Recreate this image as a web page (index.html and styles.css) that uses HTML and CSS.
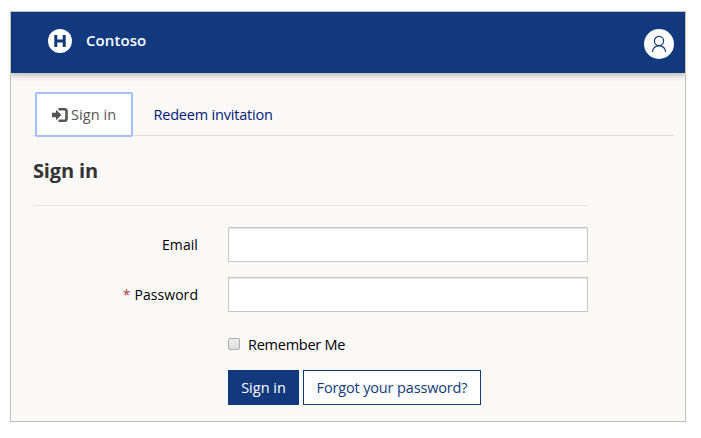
FILE: index.html
```html
<!DOCTYPE html>
<html lang="en">
<head>
<meta charset="utf-8">
<title>Contoso</title>
<link rel="stylesheet" href="styles.css">
</head>
<body>
<div class="window">
  <header class="header">
    <svg class="logo" viewBox="0 0 24 24"><circle cx="12" cy="12" r="12"/><path d="M7.8 6v12M16.2 6v12M7.8 12h8.4"/></svg>
    <span class="brand">Contoso</span>
    <svg class="avatar" viewBox="0 0 30 30"><circle class="disc" cx="15" cy="15" r="15"/><circle cx="15" cy="12" r="4.6"/><path d="M8.4 23a6.6 6.4 0 0 1 13.2 0"/></svg>
  </header>
  <main class="content">
    <nav class="tabs">
      <a class="tab active"><svg class="enter" viewBox="0 0 16 14"><path d="M0 4.8h4V1.8L9.5 7 4 12.2V9.2H0z"/><path class="door" d="M6.5 1.3h6a2 2 0 0 1 2 2v7.4a2 2 0 0 1-2 2h-6"/></svg><span>Sign in</span></a>
      <a class="tab redeem"><span>Redeem invitation</span></a>
    </nav>
    <form class="form">
      <h1 class="title">Sign in</h1>
      <div class="row"><label class="label">Email</label><input class="field" type="text"></div>
      <div class="row"><label class="label"><span class="star">*</span><span class="password">Password</span></label><input class="field" type="password"></div>
      <label class="remember"><span class="box"></span><span class="caption">Remember Me</span></label>
      <div class="actions"><button class="btn primary" type="button">Sign in</button><button class="btn forgot" type="button">Forgot your password?</button></div>
    </form>
  </main>
</div>
</body>
</html>
```
FILE: styles.css
```css
* { box-sizing: border-box; }
body { margin: 0; background: #fff; font: 400 14.5px/20px "Open Sans", "Noto Sans", sans-serif; color: #000; }
.window { width: 676px; height: 411px; margin: 11px 0 0 10px; border: 1px solid #bfbfbf; background: #faf9f8; }
.header { height: 61px; background: #12397d; display: flex; align-items: center; padding: 0 11px 0 37px; box-shadow: 0 2px 6px rgba(0,0,0,.3); clip-path: inset(0 0 -10px 0); }
.logo { width: 24px; height: 24px; fill: #fff; margin-top: -3px; }
.logo path { stroke: #12397d; stroke-width: 3; fill: none; }
.brand { color: #fff; font-size: 15px; font-weight: 600; letter-spacing: .08px; margin: -5px auto 0 14px; }
.avatar { width: 30px; height: 30px; margin-top: 3px; fill: none; stroke: #12397d; stroke-width: 1.2; }
.avatar .disc { fill: #fff; stroke: none; }
.content { padding: 19px 11px 0 22px; }
.tabs { display: flex; height: 44px; border-bottom: 1px solid #ddd; }
.tab { display: flex; align-items: center; height: 45px; margin-left: 2px; color: #00187a; white-space: nowrap; }
.redeem { margin-left: 20.5px; letter-spacing: -.2px; }
.active { width: 98px; border: 2px solid #a1c1f8; border-radius: 2px; background: #fff; color: #555; padding-left: 15px; letter-spacing: .08px; }
.enter { width: 16px; height: 14px; margin-right: 3px; fill: #555; flex: none; }
.enter .door { fill: none; stroke: #555; stroke-width: 2.6; }
.form { width: 555px; }
.title { height: 70px; margin: 0 0 21px; padding-top: 21px; border-bottom: 1px solid #e5e5e5; font-size: 20px; line-height: 28px; font-weight: 700; letter-spacing: -.15px; color: #333; }
.row { display: flex; height: 35px; margin-bottom: 15px; }
.label { width: 165px; margin-right: 30px; display: flex; justify-content: flex-end; align-items: center; font-size: 14px; font-weight: 500; letter-spacing: .08px; }
.password { letter-spacing: .04px; }
.star { color: #a94442; margin-right: 4px; }
.field { width: 360px; height: 35px; border: 1px solid #c8c8c8; border-radius: 0; background: #fff; box-shadow: inset 0 1px 1px rgba(0,0,0,.1); outline: 0; }
.remember { display: flex; align-items: center; height: 20px; margin: 22px 0 16px 195px; letter-spacing: -.25px; }
.caption { padding-top: 2px; }
.box { width: 12px; height: 12px; margin-right: 8px; border: 1px solid #adadad; border-radius: 2px; background: linear-gradient(#eee, #ddd); }
.actions { display: flex; gap: 4px; margin-left: 195px; }
.btn { height: 35px; padding: 0; border: 1px solid #12397d; background: #fff; color: #12397d; font: inherit; white-space: nowrap; }
.primary { width: 71px; background: #12397d; color: #fff; }
.forgot { width: 178px; letter-spacing: -.15px; }
```
